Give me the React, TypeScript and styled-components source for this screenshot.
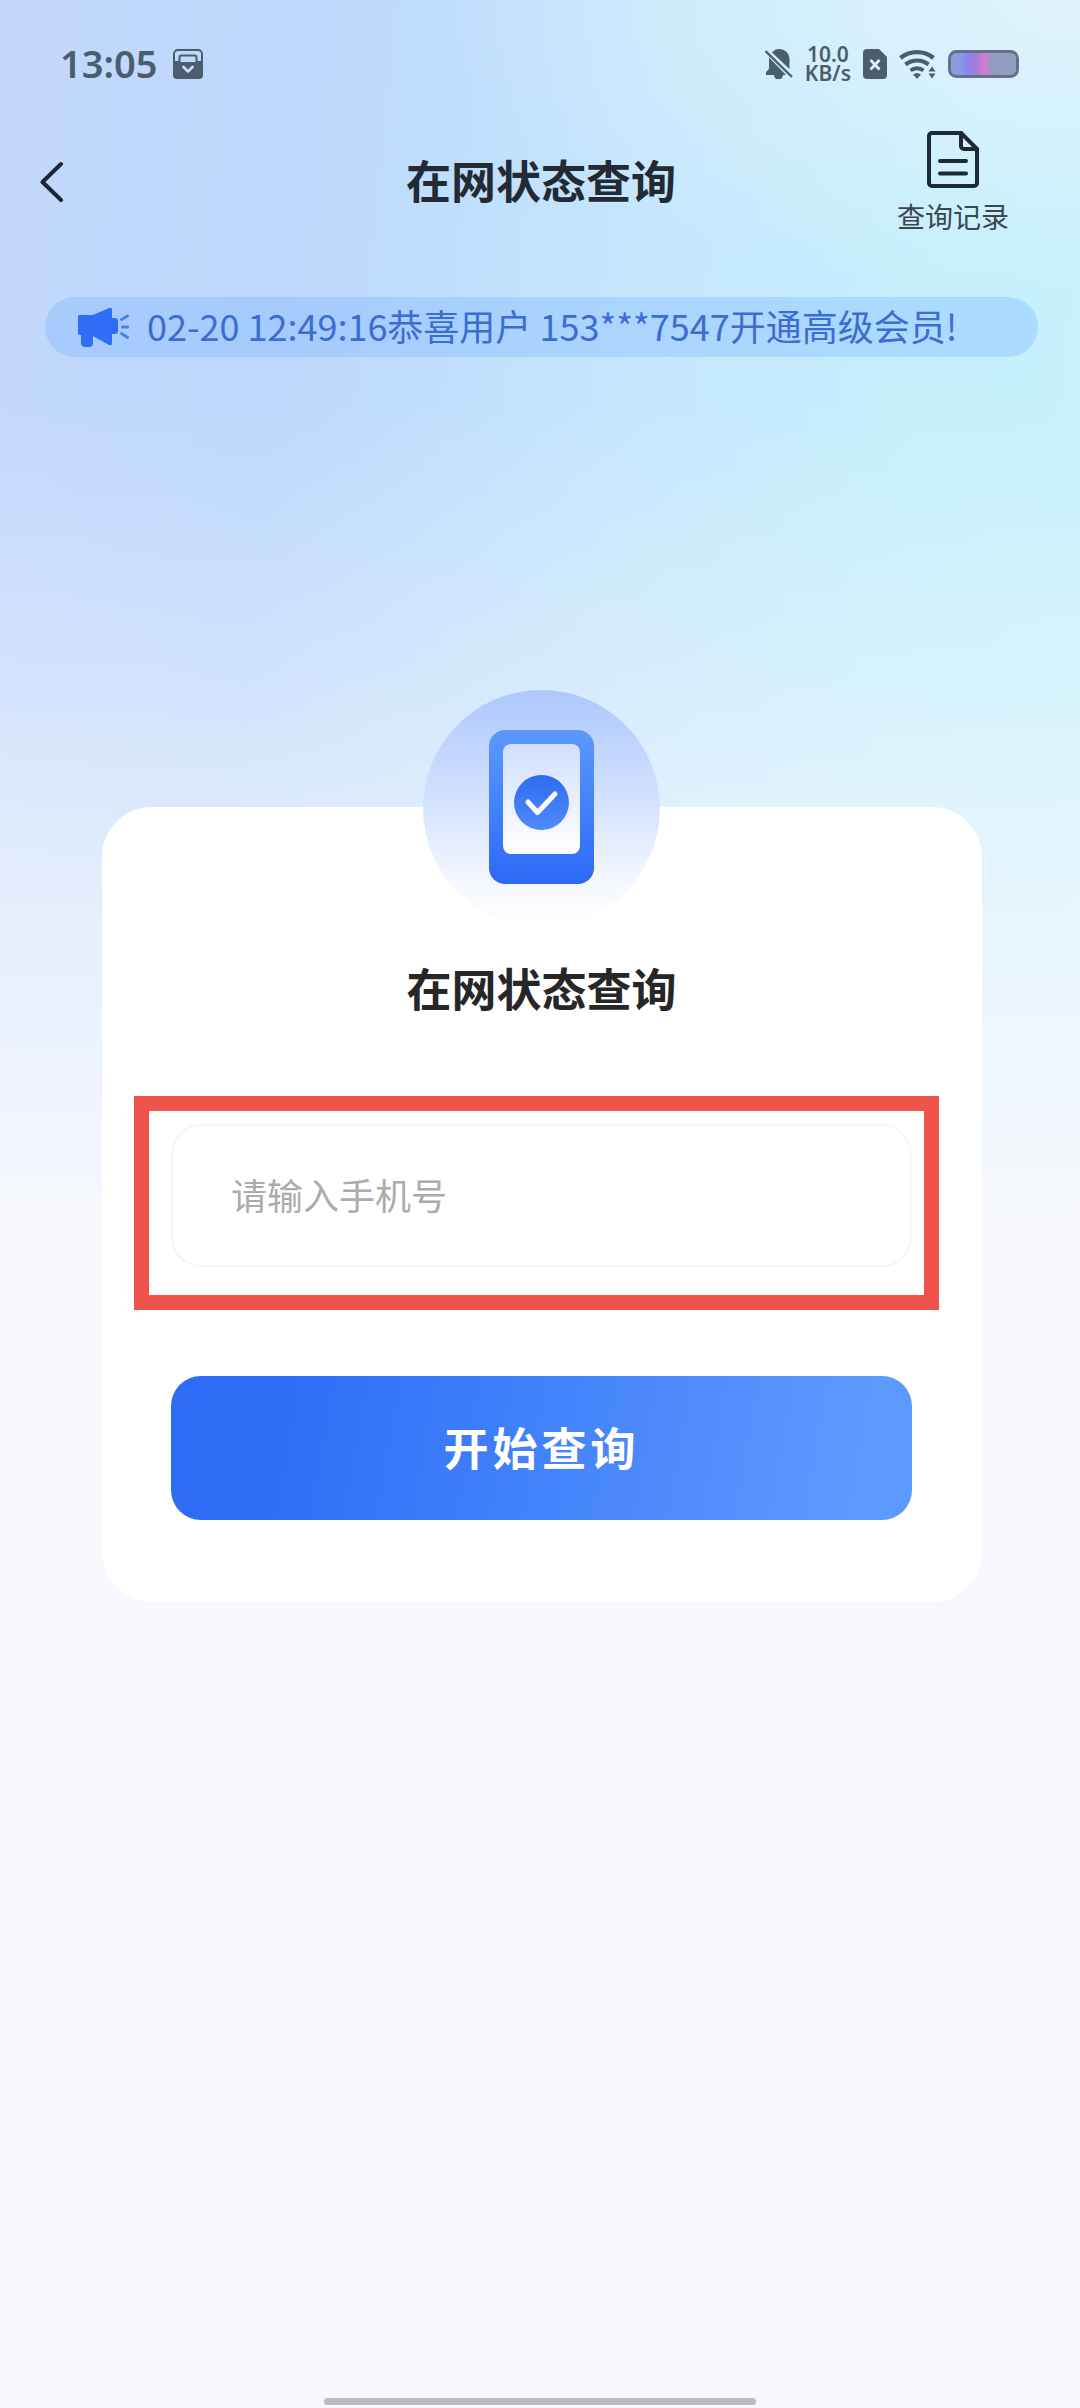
import React, { useState } from "react";
import styled, { createGlobalStyle } from "styled-components";

const GlobalStyle = createGlobalStyle`
  *, *::before, *::after { box-sizing: border-box; }
  body {
    margin: 0;
    background: #f6f8fd;
    font-family: "Noto Sans CJK SC", "Noto Sans", sans-serif;
  }
  button, input { font-family: inherit; }
`;

const Page = styled.div`
  min-height: 100vh;
  display: flex;
  flex-direction: column;
  background:
    radial-gradient(ellipse 640px 300px at 100% 0, rgba(226, 243, 252, 0.9) 0, rgba(226, 243, 252, 0) 100%),
    linear-gradient(180deg, rgba(246, 248, 253, 0) 400px, rgba(246, 248, 253, 0.34) 680px, rgba(246, 248, 253, 0.7) 920px, #f6f8fd 1220px),
    linear-gradient(96deg, #c3d8fd 0, #bcd8fc 24%, #c5e6fd 50%, #c5effd 72%, #c6f2fc 100%);
`;

const StatusBar = styled.div`
  display: flex;
  align-items: center;
  justify-content: space-between;
  height: 84px;
  padding: 44px 61px 0 60px;
  color: #4a5e6d;
`;

const StatusGroup = styled.div<{ $gap: number }>`
  display: flex;
  align-items: center;
  gap: ${(p) => p.$gap}px;
`;

const Clock = styled.time`
  padding-bottom: 2px;
  font: 600 38px/38px "Noto Sans", sans-serif;
`;

const NetSpeed = styled.div`
  font: 600 21px/19px "Noto Sans", sans-serif;
  text-align: center;
`;

const Header = styled.header`
  display: grid;
  grid-template-columns: 1fr auto 1fr;
  align-items: center;
  height: 196px;
  padding: 0 38px 0 40px;
`;

const IconButton = styled.button`
  justify-self: start;
  display: flex;
  padding: 0;
  border: 0;
  background: none;
  color: #1c2732;
`;

const RecordLink = styled.a`
  justify-self: end;
  display: flex;
  flex-direction: column;
  align-items: center;
  gap: 8px;
  margin-right: 33px;
  padding-top: 2px;
  color: #3b474f;
  font-size: 28px;
  line-height: 40px;
  text-decoration: none;
`;

const Title = styled.h1`
  margin: 0;
  padding-bottom: 4px;
  color: #222b33;
  font-size: 45px;
  font-weight: 700;
  line-height: 64px;
`;

const Notice = styled.div`
  display: flex;
  align-items: center;
  gap: 18px;
  height: 60px;
  margin: 17px 42px 0 45px;
  padding: 0 33px;
  border-radius: 30px;
  background: rgba(120, 178, 255, 0.34);
  color: #3d6cd3;
  font-size: 36px;
  line-height: 56px;
  white-space: nowrap;
`;

const NoticeText = styled.span`
  padding-bottom: 4px;
`;

const Card = styled.main`
  display: flex;
  flex-direction: column;
  align-items: stretch;
  margin: 450px 98px 0 102px;
  padding: 0 70px 82px 69px;
  border-radius: 50px;
  background: #fff;
`;

const Badge = styled.div`
  align-self: center;
  display: flex;
  margin-top: -117px;
`;

const CardTitle = styled.h2`
  margin: 29px 0 0;
  color: #272727;
  font-size: 45px;
  font-weight: 700;
  line-height: 64px;
  text-align: center;
`;

const Form = styled.form`
  display: flex;
  flex-direction: column;
  gap: 109px;
  margin-top: 104px;
`;

const Field = styled.label`
  position: relative;
  display: block;

  &::after {
    content: "";
    position: absolute;
    inset: -28px -27px -43px -37px;
    border: 15px solid #f0534b;
    pointer-events: none;
  }
`;

const PhoneInput = styled.input`
  display: block;
  width: 100%;
  height: 143px;
  padding: 0 58px 4px;
  border: 2px solid #f4f6fa;
  border-radius: 30px;
  outline: none;
  background: #fff;
  color: #272727;
  font-size: 36px;

  &::placeholder {
    color: #ababab;
    opacity: 1;
  }
`;

const SubmitButton = styled.button`
  height: 144px;
  padding: 0 0 4px;
  border: 0;
  border-radius: 30px;
  background: linear-gradient(100deg, #2d6df6 14%, #5d9aff 92%);
  color: #fff;
  font-size: 45px;
  font-weight: 700;
  letter-spacing: 4px;
`;

const HomeIndicator = styled.div`
  align-self: center;
  width: 40%;
  height: 7px;
  margin: auto 0 3px;
  border-radius: 4px;
  background: #b9bbbf;
`;

const PocketIcon = () => (
  <svg width="30" height="30" viewBox="0 0 30 30" fill="none" aria-hidden="true">
    <path d="M1 13V5a4 4 0 0 1 4-4h20a4 4 0 0 1 4 4v8" stroke="currentColor" strokeWidth="2" />
    <path d="M6.500 12V8.500a2 2 0 0 1 2-2h13a2 2 0 0 1 2 2V12" stroke="currentColor" strokeWidth="2" />
    <path d="M0 12h7.500v1h15v-1H30v14a4 4 0 0 1-4 4H4a4 4 0 0 1-4-4z" fill="currentColor" />
    <path d="M10.500 18l4.500 4.500 4.500-4.500" stroke="#c3dafb" strokeWidth="2.800" strokeLinecap="round" strokeLinejoin="round" />
  </svg>
);

const MutedIcon = () => (
  <svg width="28" height="30" viewBox="0 0 28 30" fill="none" aria-hidden="true">
    <path d="M7 3.500C9 1 11.500 0 14 0c6 0 10.500 4.500 10.500 10.500v9.500z" fill="currentColor" />
    <path d="M4 8.500L21 26h-3a4.500 4.500 0 0 1-9 0H1v-3l3-3z" fill="currentColor" />
    <path d="M0.500 2l26.500 26" stroke="currentColor" strokeWidth="2.400" />
  </svg>
);

const SimIcon = () => (
  <svg width="24" height="30" viewBox="0 0 24 30" fill="none" aria-hidden="true">
    <path d="M4 0h12l8 8v18a4 4 0 0 1-4 4H4a4 4 0 0 1-4-4V4a4 4 0 0 1 4-4z" fill="currentColor" />
    <path d="M7.500 11l9 9.500M16.500 11l-9 9.500" stroke="#dbf1fb" strokeWidth="2.800" />
  </svg>
);

const WifiIcon = () => (
  <svg width="37" height="30" viewBox="0 0 37 30" fill="none" aria-hidden="true">
    <path d="M1.500 9a26 26 0 0 1 33 0" stroke="currentColor" strokeWidth="4.400" />
    <path d="M6.500 15.500a18.500 18.500 0 0 1 23 0" stroke="currentColor" strokeWidth="4.200" />
    <path d="M11.500 21.500a11 11 0 0 1 13 0" stroke="currentColor" strokeWidth="4" />
    <path d="M14 25.500q4-3 8 0L18 30z" fill="currentColor" />
    <path d="M29.500 22.500l3.500-5 3.500 5zM29.500 24.500l3.500 5 3.500-5z" fill="currentColor" />
  </svg>
);

const BatteryIcon = () => (
  <svg width="71" height="28" viewBox="0 0 71 28" aria-hidden="true">
    <defs>
      <linearGradient id="charge" x1="0" x2="1" y1="0" y2="0">
        <stop offset="0" stopColor="#8c9fce" />
        <stop offset="0.150" stopColor="#869ddd" />
        <stop offset="0.240" stopColor="#8488f4" />
        <stop offset="0.380" stopColor="#a47ad8" />
        <stop offset="0.530" stopColor="#cf7fcb" />
        <stop offset="0.620" stopColor="#929bc0" />
        <stop offset="1" stopColor="#8fa0c0" />
      </linearGradient>
    </defs>
    <rect x="1.500" y="1.500" width="68" height="25" rx="7" fill="url(#charge)" stroke="#666e8d" strokeWidth="3" />
  </svg>
);

const BackIcon = () => (
  <svg width="24" height="42" viewBox="0 0 24 42" fill="none" aria-hidden="true">
    <path d="M21 3L2.500 21 21 39" stroke="currentColor" strokeWidth="4" strokeLinecap="round" strokeLinejoin="round" />
  </svg>
);

const RecordIcon = () => (
  <svg width="52" height="57" viewBox="0 0 52 57" fill="none" stroke="#1b2b31" strokeWidth="4" strokeLinejoin="round" strokeLinecap="round" aria-hidden="true">
    <path d="M5 2h29l16 16v34a3 3 0 0 1-3 3H5a3 3 0 0 1-3-3V5a3 3 0 0 1 3-3z" />
    <path d="M34 2v13a3 3 0 0 0 3 3h13" />
    <path d="M13 30h26M13 42.500h26" />
  </svg>
);

const MegaphoneIcon = () => (
  <svg width="51" height="40" viewBox="0 0 51 40" fill="none" aria-hidden="true">
    <path d="M1 8h14L31 1q3-1 3 2v8h3q3 0 3 3v10q0 3-3 3h-3v9q0 3-3 2l-16-9v7a4 4 0 0 1-4 4H7a4 4 0 0 1-4-4v-8H2q-2 0-2-2V9z" fill="#2f6df6" />
    <path d="M43.500 12.500l6-3.500M44.500 20H50M43.500 26.500l6 4" stroke="#4b80f2" strokeWidth="3" strokeLinecap="round" />
  </svg>
);

const PhoneBadge = () => (
  <svg width="237" height="237" viewBox="0 0 237 237" fill="none" aria-hidden="true">
    <defs>
      <linearGradient id="disc" x1="0" x2="0" y1="0" y2="1">
        <stop offset="0" stopColor="#adc8fd" />
        <stop offset="0.500" stopColor="#d6e3ff" />
        <stop offset="0.800" stopColor="#f4f7ff" />
        <stop offset="1" stopColor="#ffffff" />
      </linearGradient>
      <linearGradient id="body" x1="0" x2="0" y1="0" y2="1">
        <stop offset="0" stopColor="#5b99fd" />
        <stop offset="1" stopColor="#2c69f5" />
      </linearGradient>
      <linearGradient id="screen" x1="0" x2="0" y1="0" y2="1">
        <stop offset="0" stopColor="#d0dffe" />
        <stop offset="1" stopColor="#ffffff" />
      </linearGradient>
      <linearGradient id="tick" x1="0" x2="0" y1="0" y2="1">
        <stop offset="0" stopColor="#2f6cf1" />
        <stop offset="1" stopColor="#4f8bfa" />
      </linearGradient>
    </defs>
    <circle cx="118.500" cy="118.500" r="118.500" fill="url(#disc)" />
    <rect x="66" y="40" width="105" height="154" rx="16" fill="url(#body)" />
    <rect x="80" y="54" width="77" height="110" rx="8" fill="url(#screen)" />
    <circle cx="118.500" cy="112.500" r="27.500" fill="url(#tick)" />
    <path d="M105 112l9.500 10.500L132 104" stroke="#fff" strokeWidth="5" strokeLinecap="round" strokeLinejoin="round" />
  </svg>
);

export default function App() {
  const [phone, setPhone] = useState("");

  return (
    <>
      <GlobalStyle />
      <Page>
        <StatusBar>
          <StatusGroup $gap={16}>
            <Clock>13:05</Clock>
            <PocketIcon />
          </StatusGroup>
          <StatusGroup $gap={12}>
            <MutedIcon />
            <NetSpeed>
              10.0
              <br />
              KB/s
            </NetSpeed>
            <SimIcon />
            <WifiIcon />
            <BatteryIcon />
          </StatusGroup>
        </StatusBar>

        <Header>
          <IconButton type="button" aria-label="返回">
            <BackIcon />
          </IconButton>
          <Title>在网状态查询</Title>
          <RecordLink href="#records">
            <RecordIcon />
            查询记录
          </RecordLink>
        </Header>

        <Notice>
          <MegaphoneIcon />
          <NoticeText>02-20 12:49:16恭喜用户 153***7547开通高级会员!</NoticeText>
        </Notice>

        <Card>
          <Badge>
            <PhoneBadge />
          </Badge>
          <CardTitle>在网状态查询</CardTitle>
          <Form onSubmit={(e) => e.preventDefault()}>
            <Field>
              <PhoneInput
                type="tel"
                aria-label="手机号"
                placeholder="请输入手机号"
                value={phone}
                onChange={(e) => setPhone(e.target.value)}
              />
            </Field>
            <SubmitButton type="submit">开始查询</SubmitButton>
          </Form>
        </Card>

        <HomeIndicator />
      </Page>
    </>
  );
}
